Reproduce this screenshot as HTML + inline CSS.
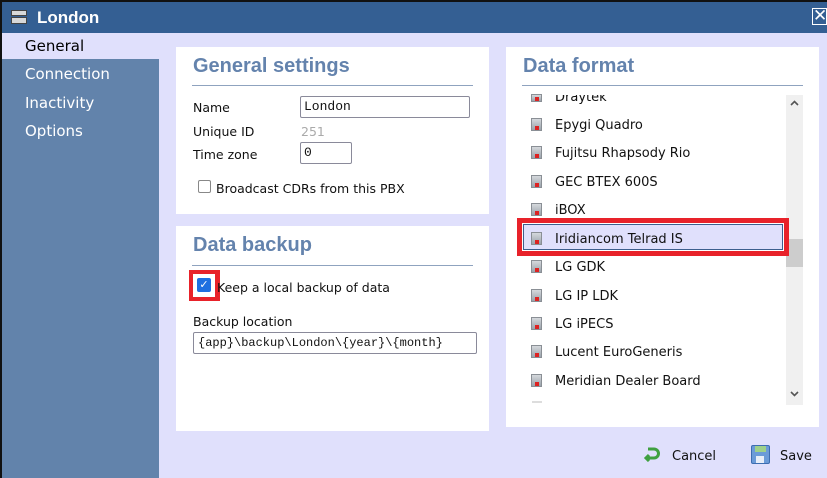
<!DOCTYPE html>
<html><head><meta charset="utf-8"><style>
*{margin:0;padding:0;box-sizing:border-box}
body{width:827px;height:478px;overflow:hidden;background:#e0e0fc;position:relative;font-family:"DejaVu Sans","Liberation Sans",sans-serif;font-size:12.5px;color:#111}
.a{position:absolute}
.panel{position:absolute;background:#fff}
.h{position:absolute;font-family:"Liberation Sans",sans-serif;font-weight:bold;font-size:20px;color:#6483ad}
.line{position:absolute;height:1px;background:#8fa3bf}
.inp{position:absolute;border:1px solid #8a8a9a;border-radius:2px;background:#fff;font-family:"Liberation Mono",monospace;font-size:13px;padding:2px 3px;white-space:nowrap;overflow:hidden}
.nav{position:absolute;left:25px;color:#fff;font-size:15px}
.row{position:absolute;left:555px;font-size:13px}
.ic{position:absolute;left:531px;width:11px;height:13px;background:linear-gradient(#d5d8dc,#9aa3ab);border:1px solid #8a8f95}
.ic:after{content:"";position:absolute;left:3px;bottom:0;width:4px;height:4px;background:#d22}
</style></head><body>
<div class="a" style="left:0;top:0;width:827px;height:2px;background:#111"></div>
<div class="a" style="left:0;top:2px;width:827px;height:31px;background:#345f93"></div>
<div class="a" style="left:0;top:0;width:2px;height:478px;background:#111"></div>
<div class="a" style="left:11px;top:10px;width:16px;height:6px;background:#d8d8d8;border:1px solid #444"></div>
<div class="a" style="left:11px;top:17px;width:16px;height:7px;background:#d8d8d8;border:1px solid #444"></div>
<div class="a" style="left:37px;top:8px;color:#fff;font-family:'Liberation Sans',sans-serif;font-weight:bold;font-size:17px">London</div>
<div class="a" style="left:812px;top:8px;width:15px;height:17px;border:1px solid #fff;color:#fff;font-weight:bold;font-size:17px;line-height:15px;text-align:center">✕</div>
<div class="a" style="left:2px;top:33px;width:157px;height:445px;background:#6283ab"></div>
<div class="a" style="left:2px;top:33px;width:157px;height:26px;background:#e0e0fc"></div>
<div class="nav" style="top:37px;color:#000">General</div>
<div class="nav" style="top:65px">Connection</div>
<div class="nav" style="top:94px">Inactivity</div>
<div class="nav" style="top:122px">Options</div>

<div class="panel" style="left:176px;top:47px;width:313px;height:167px"></div>
<div class="h" style="left:193px;top:55px">General settings</div>
<div class="line" style="left:192px;top:85px;width:281px"></div>
<div class="a" style="left:193px;top:100px">Name</div>
<div class="inp" style="left:300px;top:96px;width:170px;height:22px">London</div>
<div class="a" style="left:193px;top:124px">Unique ID</div>
<div class="a" style="left:301px;top:124px;color:#aaa">251</div>
<div class="a" style="left:193px;top:147px">Time zone</div>
<div class="inp" style="left:300px;top:142px;width:52px;height:22px">0</div>
<div class="a" style="left:198px;top:180px;width:13px;height:13px;border:1px solid #888;border-radius:2px"></div>
<div class="a" style="left:216px;top:181px">Broadcast CDRs from this PBX</div>

<div class="panel" style="left:176px;top:226px;width:313px;height:205px"></div>
<div class="h" style="left:193px;top:234px">Data backup</div>
<div class="line" style="left:192px;top:265px;width:281px"></div>
<div class="a" style="left:189px;top:270px;width:31px;height:31px;background:#e8222a"></div>
<div class="a" style="left:193px;top:274px;width:22px;height:23px;background:#fff"></div>
<div class="a" style="left:197px;top:278px;width:14px;height:14px;background:#1f6fe0;border-radius:2px;color:#fff;font-size:11px;line-height:14px;text-align:center;font-weight:bold">✓</div>
<div class="a" style="left:217px;top:280px">Keep a local backup of data</div>
<div class="a" style="left:193px;top:314px">Backup location</div>
<div class="inp" style="left:193px;top:332px;width:284px;height:22px;font-size:12px;padding:3px 4px">{app}\backup\London\{year}\{month}</div>

<div class="panel" style="left:506px;top:47px;width:313px;height:380px"></div>
<div class="h" style="left:523px;top:55px">Data format</div>
<div class="line" style="left:522px;top:85px;width:281px"></div>
<div class="a" style="left:786px;top:95px;width:17px;height:310px;background:#f0f0f0"></div>
<div class="a" style="left:786px;top:239px;width:17px;height:28px;background:#cdcdcd"></div>
<svg class="a" style="left:786px;top:95px" width="17" height="310"><path d="M5 10 L8.5 6.5 L12 10" stroke="#555" stroke-width="1.6" fill="none"/><path d="M5 297 L8.5 300.5 L12 297" stroke="#555" stroke-width="1.6" fill="none"/></svg>
<div class="a" style="left:517px;top:218px;width:272px;height:38px;background:#e8222a"></div>
<div class="a" style="left:522px;top:223px;width:262px;height:28px;background:#fff"></div>
<div class="a" style="left:523px;top:224px;width:260px;height:26px;background:#e0e0fc;border:1px solid #3d5f8e"></div>
<div class="ic" style="top:94px;height:8px"></div><div class="row" style="top:90px;clip-path:inset(5px 0 0 0)">Draytek</div>
<div class="ic" style="top:118px"></div><div class="row" style="top:118px">Epygi Quadro</div>
<div class="ic" style="top:146px"></div><div class="row" style="top:146px">Fujitsu Rhapsody Rio</div>
<div class="ic" style="top:175px"></div><div class="row" style="top:175px">GEC BTEX 600S</div>
<div class="ic" style="top:203px"></div><div class="row" style="top:203px">iBOX</div>
<div class="ic" style="top:232px"></div><div class="row" style="top:232px">Iridiancom Telrad IS</div>
<div class="ic" style="top:260px"></div><div class="row" style="top:260px">LG GDK</div>
<div class="ic" style="top:289px"></div><div class="row" style="top:289px">LG IP LDK</div>
<div class="ic" style="top:317px"></div><div class="row" style="top:317px">LG iPECS</div>
<div class="ic" style="top:345px"></div><div class="row" style="top:345px">Lucent EuroGeneris</div>
<div class="ic" style="top:374px"></div><div class="row" style="top:374px">Meridian Dealer Board</div>
<div class="a" style="left:532px;top:401px;width:10px;height:2px;background:#ddd"></div>

<svg class="a" style="left:643px;top:446px" width="18" height="16"><path d="M5 3 H11 A4.5 4.5 0 0 1 11 12 H3 M6 9 L3 12 L6 15" stroke="#3fa040" stroke-width="3" fill="none"/></svg>
<div class="a" style="left:672px;top:449px;font-size:13px">Cancel</div>
<div class="a" style="left:751px;top:445px;width:19px;height:19px;background:#6b9bd8;border:1px solid #3d6db0;border-radius:2px"></div>
<div class="a" style="left:755px;top:446px;width:11px;height:6px;background:#9ed08a"></div>
<div class="a" style="left:756px;top:456px;width:8px;height:7px;background:#e8eef8"></div>
<div class="a" style="left:780px;top:449px;font-size:13px">Save</div>
</body></html>
